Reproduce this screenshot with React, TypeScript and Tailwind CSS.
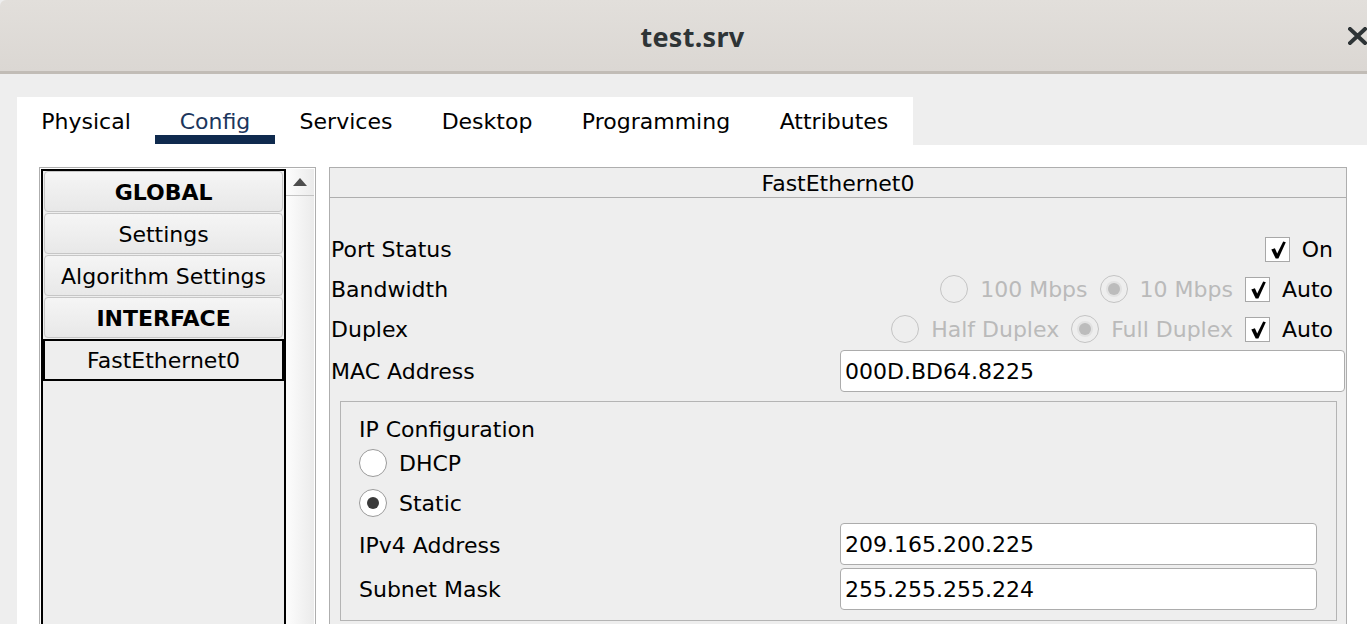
import React from "react";

const tabs = [
  { name: "Physical", w: "w-[138px]" },
  { name: "Config", w: "w-[120px]", active: true },
  { name: "Services", w: "w-[142px]" },
  { name: "Desktop", w: "w-[140px]" },
  { name: "Programming", w: "w-[198px]" },
  { name: "Attributes", w: "w-[158px]" },
];

const listItems = [
  { label: "GLOBAL", bold: true },
  { label: "Settings" },
  { label: "Algorithm Settings" },
  { label: "INTERFACE", bold: true },
  { label: "FastEthernet0", selected: true },
];

function CheckBox() {
  return (
    <span className="flex h-[25px] w-[25px] shrink-0 items-center justify-center border border-[#a8a8a8] bg-white">
      <svg width="23" height="23" viewBox="0 0 23 23">
        <path d="M5.3 11.5 L8.9 10.2 L11.2 15.6 L17.2 3.4 L19.8 4.2 L12.4 20.6 L9.7 20.6 Z" fill="#000" />
      </svg>
    </span>
  );
}

function Radio({ checked, disabled }: { checked?: boolean; disabled?: boolean }) {
  return (
    <span
      className={`flex h-[28px] w-[28px] shrink-0 items-center justify-center rounded-full border-[1.5px] ${
        disabled ? "border-[#c4c4c4] bg-[#eeeeee]" : "border-[#9a9a9a] bg-white"
      }`}
    >
      {checked && (
        <span
          className={`h-[12px] w-[12px] rounded-full ${
            disabled ? "bg-[#bcbcbc] ring-2 ring-[#e2e2e2]" : "bg-[#3a3a3a]"
          }`}
        />
      )}
    </span>
  );
}

function TextField({ value, w }: { value: string; w: string }) {
  return (
    <div className={`flex h-[42px] ${w} items-center rounded-[4px] border border-[#acacac] bg-white pl-[4px] text-black`}>
      {value}
    </div>
  );
}

export default function App() {
  return (
    <div className="flex h-[624px] w-[1367px] flex-col overflow-hidden bg-[#eeeeee] font-['DejaVu_Sans',sans-serif] text-[22px] text-black">
      {/* window title bar */}
      <div className="relative flex h-[74px] shrink-0 items-center justify-center rounded-tl-[6px] border-b-[3px] border-[#c1bcb6] bg-gradient-to-b from-[#e2dfdb] to-[#dbd7d3] pl-[18px] pt-[3px]">
        <span className="font-['Noto_Sans',sans-serif] text-[27px] font-bold tracking-[0.3px] text-[#2e3436]">test.srv</span>
        <svg className="absolute left-[1348px] top-[27px]" width="22" height="18" viewBox="0 0 22 18">
          <path d="M2 2 L17 16 M17 2 L2 16" stroke="#2e3436" strokeWidth="4" strokeLinecap="square" />
        </svg>
      </div>

      <div className="flex flex-1 flex-col pl-[17px] pt-[23px]">
        {/* tab strip */}
        <div className="flex h-[48px] w-[896px] shrink-0 bg-white">
          {tabs.map((t) => (
            <div key={t.name} className={`relative flex h-full ${t.w} items-center justify-center`}>
              <span className={t.active ? "text-[#1b365d]" : "text-black"}>{t.name}</span>
              {t.active && <div className="absolute bottom-[1px] left-0 right-0 h-[9px] bg-[#0f2a4e]" />}
            </div>
          ))}
        </div>

        {/* content */}
        <div className="flex flex-1 gap-[13px] bg-white pl-[22px] pt-[22px]">
          {/* left list */}
          <div className="flex h-[600px] w-[277px] shrink-0 border border-[#aeaeae] p-[1px]">
            <div className="flex w-[246px] flex-col gap-[1px] border-2 border-black bg-[#eeeeee]">
              {listItems.map((it) =>
                it.selected ? (
                  <div key={it.label} className="flex h-[42px] items-center justify-center border-2 border-black bg-[#eeeeee] pt-[1px]">
                    {it.label}
                  </div>
                ) : (
                  <div
                    key={it.label}
                    className={`mx-[1px] flex h-[41px] items-center justify-center rounded-[4px] border border-[#c6c6c6] bg-gradient-to-b from-[#f5f5f5] to-[#e8e8e8] pt-[2px] ${
                      it.bold ? "font-bold" : ""
                    }`}
                  >
                    {it.label}
                  </div>
                )
              )}
            </div>
            <div className="flex w-[28px] flex-col bg-gradient-to-r from-[#fdfdfd] to-[#ebebeb]">
              <div className="flex h-[27px] items-center justify-center border-b border-[#c4c4c4]">
                <svg width="14" height="8" viewBox="0 0 14 8">
                  <path d="M7 0 L14 8 L0 8 Z" fill="#4d4d4d" />
                </svg>
              </div>
            </div>
          </div>

          {/* right panel */}
          <div className="flex h-[600px] w-[1018px] shrink-0 flex-col border border-[#aeaeae] bg-[#eeeeee]">
            <div className="flex h-[30px] shrink-0 items-center justify-center border-b border-[#aeaeae] pt-[1px]">FastEthernet0</div>

            <div className="mt-[31px] flex h-[40px] items-center justify-between pl-[1px] pr-[13px]">
              <span>Port Status</span>
              <div className="flex items-center gap-[12px]">
                <CheckBox />
                <span>On</span>
              </div>
            </div>

            <div className="flex h-[40px] items-center justify-between pl-[1px] pr-[13px]">
              <span>Bandwidth</span>
              <div className="flex items-center gap-[12px]">
                <Radio disabled />
                <span className="text-[#bababa]">100 Mbps</span>
                <Radio disabled checked />
                <span className="text-[#bababa]">10 Mbps</span>
                <CheckBox />
                <span>Auto</span>
              </div>
            </div>

            <div className="flex h-[40px] items-center justify-between pl-[1px] pr-[13px]">
              <span>Duplex</span>
              <div className="flex items-center gap-[12px]">
                <Radio disabled />
                <span className="text-[#bababa]">Half Duplex</span>
                <Radio disabled checked />
                <span className="text-[#bababa]">Full Duplex</span>
                <CheckBox />
                <span>Auto</span>
              </div>
            </div>

            <div className="mt-[1px] flex h-[42px] items-center">
              <span className="w-[510px] shrink-0 pl-[1px]">MAC Address</span>
              <TextField value="000D.BD64.8225" w="w-[505px]" />
            </div>

            {/* IP configuration box */}
            <div className="ml-[10px] mr-[9px] mt-[9px] flex flex-col border border-[#b4b4b4] pb-[9px] pl-[18px] pt-[7px]">
              <div className="flex h-[34px] items-center pt-[6px]">IP Configuration</div>
              <div className="flex h-[40px] items-center gap-[12px]">
                <Radio />
                <span>DHCP</span>
              </div>
              <div className="flex h-[40px] items-center gap-[12px]">
                <Radio checked />
                <span>Static</span>
              </div>
              <div className="flex h-[44px] items-start">
                <span className="flex h-[44px] w-[481px] shrink-0 items-center">IPv4 Address</span>
                <TextField value="209.165.200.225" w="w-[477px]" />
              </div>
              <div className="flex h-[44px] items-center">
                <span className="w-[481px] shrink-0">Subnet Mask</span>
                <TextField value="255.255.255.224" w="w-[477px]" />
              </div>
            </div>
          </div>
        </div>
      </div>
    </div>
  );
}
